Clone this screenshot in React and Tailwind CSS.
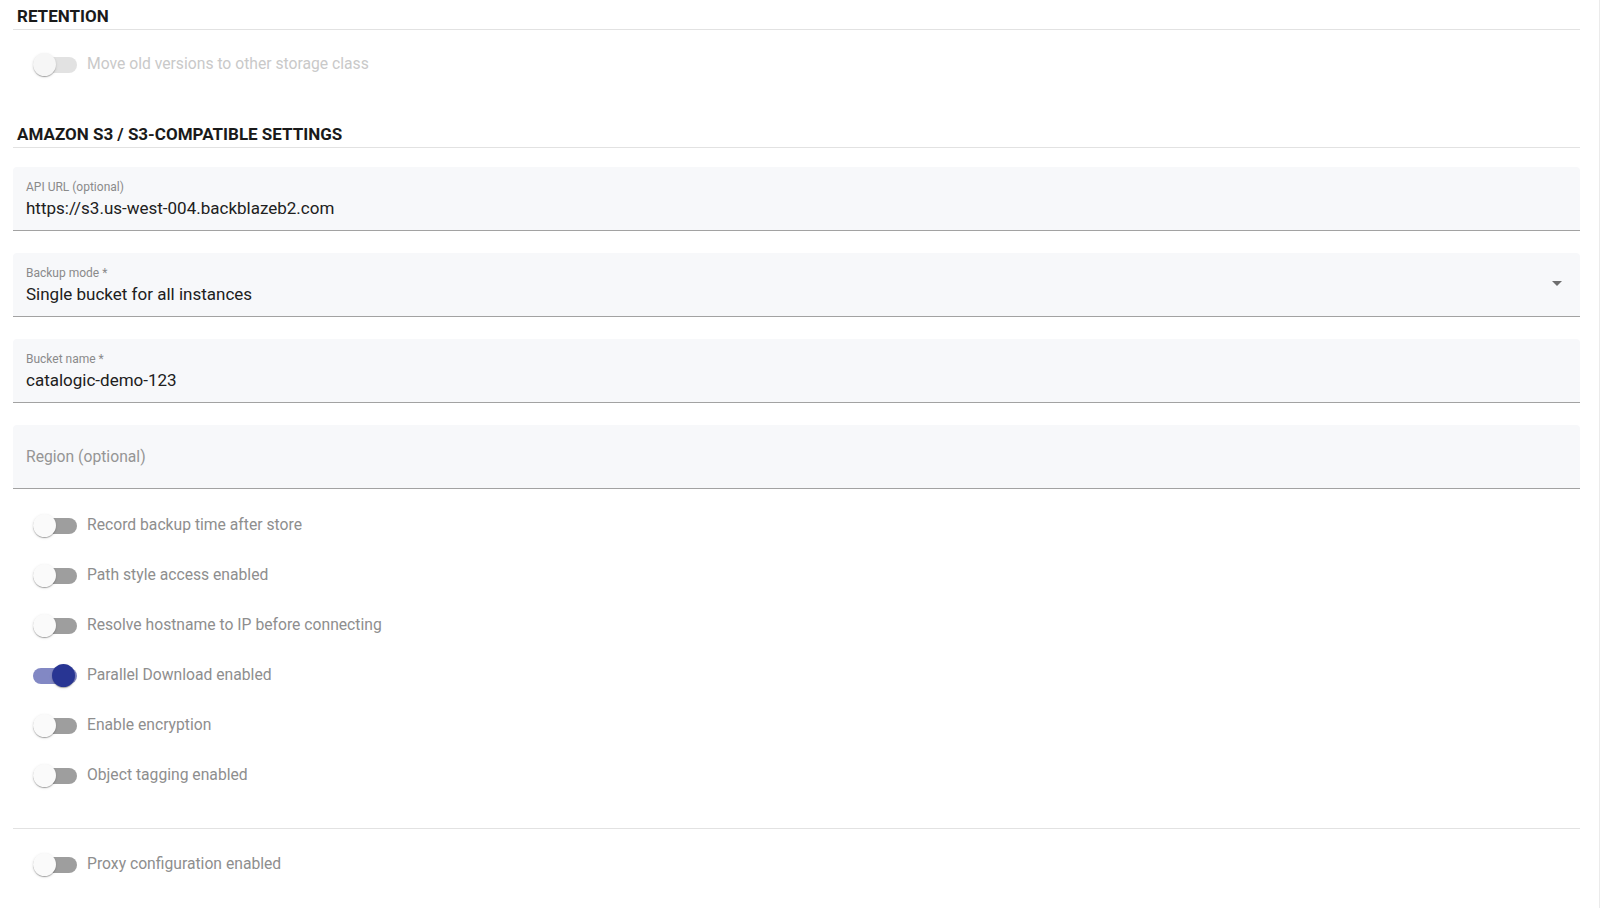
import React from 'react';

const font = { fontFamily: 'Roboto, "Liberation Sans", Arial, sans-serif' };

function SectionTitle({ children, className = '' }) {
    return (
        <div className={`border-b border-[#e2e2e2] pl-[4px] pt-[6px] pb-[3px] ${className}`}>
            <h2 className="text-[17px] leading-[20px] font-bold text-[#1a1a1a]">{children}</h2>
        </div>
    );
}

function Switch({ checked = false, disabled = false }) {
    const track = disabled ? 'bg-[#e2e2e2]' : checked ? 'bg-[#8288c4]' : 'bg-[#9e9e9e]';
    const thumb = disabled ? 'bg-[#f6f6f6]' : checked ? 'bg-[#283593]' : 'bg-[#fafafa]';
    return (
        <span className="relative inline-block w-[45px] h-[23px] ml-[19px] shrink-0">
            <span className={`absolute left-[1px] right-0 top-[4px] h-[16px] rounded-full ${track}`} />
            <span
                className={`absolute top-0 w-[23px] h-[23px] rounded-full shadow-[0_2px_1px_-1px_rgba(0,0,0,0.2),0_1px_1px_0_rgba(0,0,0,0.14),0_1px_3px_0_rgba(0,0,0,0.12)] ${thumb} ${
                    checked ? 'left-[20px]' : 'left-[1px]'
                }`}
            />
        </span>
    );
}

function ToggleRow({ label, checked, disabled, className = '' }) {
    return (
        <div className={`flex items-center h-[50px] ${className}`}>
            <Switch checked={checked} disabled={disabled} />
            <span className={`ml-[10px] text-[15.7px] leading-[20px] ${disabled ? 'text-[#c9c9c9]' : 'text-[#8e8e8e]'}`}>
                {label}
            </span>
        </div>
    );
}

function FilledField({ label, value, select = false, className = '' }) {
    return (
        <div className={`relative h-[64px] rounded-t-[4px] bg-[#f7f8fa] border-b border-[#a2a2a2] px-[13px] ${className}`}>
            {value ? (
                <div className="pt-[12px]">
                    <div className="text-[12px] leading-[16px] text-[#8a8a8a]">{label}</div>
                    <div className="mt-[3px] text-[17px] leading-[20px] text-[#202020]">{value}</div>
                </div>
            ) : (
                <div className="h-full flex items-center text-[15.7px] leading-[20px] text-[#959595]">{label}</div>
            )}
            {select && (
                <svg className="absolute right-[11px] top-[18px]" width="24" height="24" viewBox="0 0 24 24">
                    <path d="M7 10l5 5 5-5z" fill="#6e6e6e" />
                </svg>
            )}
        </div>
    );
}

export default function App() {
    return (
        <div className="min-h-screen bg-white border-r border-[#ebebeb] pl-[13px] pr-[19px]" style={font}>
            {/* retention */}
            <SectionTitle>RETENTION</SectionTitle>
            <ToggleRow className="mt-[9px]" label="Move old versions to other storage class" disabled />

            {/* s3 settings */}
            <SectionTitle className="mt-[29px]">AMAZON S3 / S3-COMPATIBLE SETTINGS</SectionTitle>
            <div className="mt-[19px] flex flex-col gap-[22px]">
                <FilledField label="API URL (optional)" value="https://s3.us-west-004.backblazeb2.com" />
                <FilledField label="Backup mode *" value="Single bucket for all instances" select />
                <FilledField label="Bucket name *" value="catalogic-demo-123" />
                <FilledField label="Region (optional)" />
            </div>

            <div className="mt-[11px]">
                <ToggleRow label="Record backup time after store" />
                <ToggleRow label="Path style access enabled" />
                <ToggleRow label="Resolve hostname to IP before connecting" />
                <ToggleRow label="Parallel Download enabled" checked />
                <ToggleRow label="Enable encryption" />
                <ToggleRow label="Object tagging enabled" />
            </div>

            <div className="mt-[28px] h-px bg-[#e2e2e2]" />
            <ToggleRow className="mt-[10px]" label="Proxy configuration enabled" />
        </div>
    );
}
